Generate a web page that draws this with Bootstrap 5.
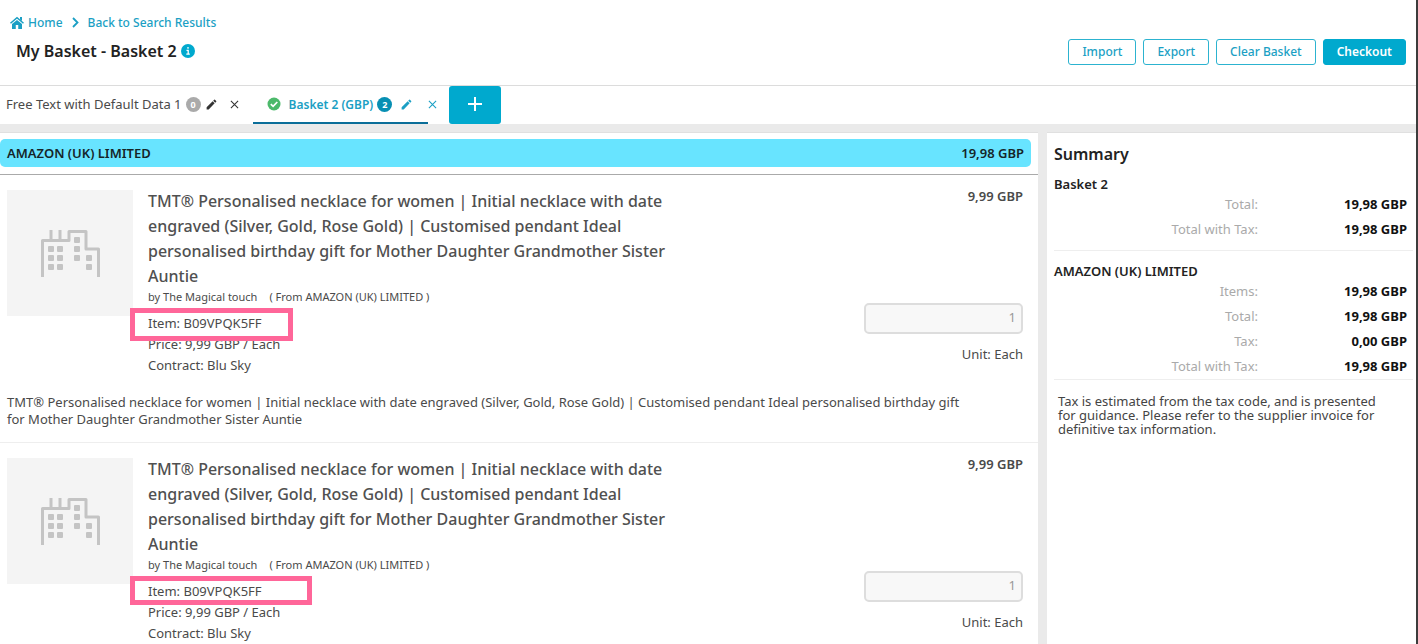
<!DOCTYPE html>
<html lang="en">
<head>
<meta charset="utf-8">
<meta name="viewport" content="width=device-width, initial-scale=1">
<title>My Basket - Basket 2</title>
<link href="https://cdn.jsdelivr.net/npm/bootstrap@5.3.0/dist/css/bootstrap.min.css" rel="stylesheet">
<style>
:root { --brand: #00a9ce; --link: #1b9fc4; --ink: #4a4a4a; }
body { font-family: "Noto Sans", "Open Sans", sans-serif; font-size: 13px; line-height: 17px; color: var(--ink); background: #eaeaea; border-right: 2px solid #3c3c3c; }
a { color: var(--link); text-decoration: none; }
.page-head { height: 86px; border-bottom: 1px solid #dcdcdc; }
.crumbs { font-size: 12px; font-weight: 500; padding: 14px 0 0 10px; gap: 7px; }
.page-title { font-size: 16px; line-height: 20px; font-weight: 600; color: #222; margin: 10px 0 0; padding-left: 16px; }
.head-tools { padding: 0 10px 20px 0; gap: 7px; }
.head-btn { font-size: 12px; line-height: 16px; font-weight: 500; padding: 4px 13px; border-radius: 3px; color: var(--link); border: 1px solid #2cb3d0; background: #fff; }
.head-btn.solid { background: var(--brand); border-color: var(--brand); color: #fff; font-weight: 600; }
.tab-strip { height: 38px; }
.basket-tab { height: 38px; border-bottom: 2px solid transparent; padding: 0 6px; }
.basket-tab.current { border-color: #0b6e99; color: var(--link); font-size: 12px; font-weight: 600; padding: 0 0 0 14px; width: 175px; }
.basket-tab button { border: 0; background: none; padding: 0; color: #333; display: flex; }
.basket-tab.current button, .basket-tab.tail button { color: var(--link); }
.basket-tab.tail { padding: 0; }
.tab-close { margin-left: 12px; }
.tally { width: 15px; height: 15px; border-radius: 8px; background: #aaa; color: #fff; font-size: 9px; line-height: 15px; font-weight: 700; text-align: center; }
.current .tally { background: #078fb3; }
.add-tab { width: 52px; height: 38px; border: 0; border-radius: 3px; background: var(--brand); margin-left: 12px; padding: 0 0 4px; }
.basket-area { gap: 9px; }
.panel { background: #fff; border-top: 1px solid #e0e0e0; }
.supplier-wrap { padding: 6px 7px 7px 0; border-bottom: 1px solid #aaa; }
.supplier-bar { background: #68e4ff; border-radius: 5px; color: #152528; font-weight: 600; line-height: 28px; padding: 0 7px; }
.item-row { padding: 14px 15px 14px 7px; border-bottom: 1px solid #eee; }
.thumb { width: 126px; height: 126px; background: #f4f4f4; margin-top: 1px; }
.item-body { padding-left: 15px; }
.item-title { font-size: 16px; line-height: 25px; font-weight: 500; color: #505050; max-width: 530px; }
.byline { font-size: 11px; line-height: 16px; margin-bottom: 8px; }
.byline span { margin-left: 12px; }
.facts { line-height: 21px; }
.outline-mark { position: absolute; top: -5px; left: -18px; width: 163px; height: 33px; border: 5px solid #ff6699; }
.outline-mark.wide { width: 182px; height: 29px; }
.amount { font-weight: 600; line-height: 14px; margin-bottom: 100px; }
.qty { width: 159px; height: 31px; font-size: 13px; text-align: right; padding: 0 5px 3px; border: 2px solid #ddd; border-radius: 5px; background: #f8f8f8; color: #999; }
.about { padding: 18px 45px 0 0; }
.side { width: 369px; padding: 11px 3px 12px 7px; }
.side h2 { font-size: 16px; line-height: 20px; font-weight: 600; color: #222; margin: 0 0 12px; }
.side h3 { font-size: 13px; line-height: 16px; font-weight: 600; color: #222; margin: 0; }
.sums { width: 100%; line-height: 25px; }
.sums th { width: 204px; text-align: right; font-weight: 400; color: #aaa; padding: 0; }
.sums td { text-align: right; font-weight: 700; color: #111; padding: 0 6px 0 0; }
.rule { border-top: 1px solid #eee; }
.side .next-group { margin-top: 8px; padding-top: 12px; }
.note { line-height: 14px; padding: 14px 20px 0 4px; color: #444; }
</style>
</head>
<body class="vh-100 overflow-hidden d-flex flex-column">
<svg class="d-none">
  <symbol id="pencil" viewBox="0 0 24 24"><path fill="currentColor" d="M3 17.2V21h3.8L17.8 9.9l-3.7-3.7L3 17.2zM20.7 7a1 1 0 0 0 0-1.4l-2.3-2.3a1 1 0 0 0-1.4 0l-1.9 1.8 3.8 3.8L20.7 7z"/></symbol>
  <symbol id="cross" viewBox="0 0 10 10"><path d="M1 1l8 8M9 1L1 9" stroke="currentColor" stroke-width="1.2"/></symbol>
  <symbol id="building" viewBox="0 0 59 47">
    <path d="M1.5 47V10.5H28V1.5H45V19H57.500V47M10 10V0M19 10V0" fill="none" stroke="#c4c4c4" stroke-width="3" stroke-linejoin="round"/>
    <g fill="#c4c4c4"><rect x="7" y="16" width="6" height="6" rx="1"/><rect x="16" y="16" width="6" height="6" rx="1"/><rect x="7" y="25" width="6" height="6" rx="1"/><rect x="16" y="25" width="6" height="6" rx="1"/><rect x="7" y="34" width="6" height="6" rx="1"/><rect x="16" y="34" width="6" height="6" rx="1"/><rect x="33" y="7" width="6" height="6" rx="1"/><rect x="33" y="16" width="6" height="6" rx="1"/><rect x="33" y="25" width="6" height="6" rx="1"/><rect x="45" y="25" width="6" height="6" rx="1"/><rect x="45" y="34" width="6" height="6" rx="1"/></g>
  </symbol>
</svg>

<header class="page-head bg-white d-flex justify-content-between flex-shrink-0">
  <div>
    <nav class="crumbs d-flex align-items-center" aria-label="breadcrumb">
      <a href="#" class="d-flex align-items-center gap-1"><svg width="14" height="13" viewBox="0 0 28 26"><path d="M14 8L4 16V26h7.500v-8h5v8H24V16z" fill="currentColor"/><path d="M1 14.500L14 3.500l13 11" fill="none" stroke="currentColor" stroke-width="3"/><path d="M20 2h4v8l-4-3z" fill="currentColor"/></svg>Home</a>
      <svg width="11" height="11" viewBox="0 0 11 11"><path d="M3 1l4.500 4.500L3 10" fill="none" stroke="#1b9fc4" stroke-width="1.800"/></svg>
      <a href="#">Back to Search Results</a>
    </nav>
    <h1 class="page-title d-flex align-items-center">My Basket - Basket 2
      <svg class="ms-1" width="14" height="14" viewBox="0 0 14 14"><circle cx="7" cy="7" r="7" fill="#00a9ce"/><path d="M7 3v1.800M5.500 6.300H7.200v4M5.300 10.200h3.500" stroke="#fff" stroke-width="1.300" fill="none"/></svg></h1>
  </div>
  <div class="head-tools d-flex align-items-end">
    <button type="button" class="head-btn">Import</button>
    <button type="button" class="head-btn">Export</button>
    <button type="button" class="head-btn">Clear Basket</button>
    <button type="button" class="head-btn solid">Checkout</button>
  </div>
</header>

<div class="tab-strip bg-white d-flex flex-shrink-0">
  <div class="basket-tab d-flex align-items-center">
    <span>Free Text with Default Data 1</span><span class="tally mx-1">0</span>
    <button type="button" aria-label="Edit"><svg width="13" height="13"><use href="#pencil"/></svg></button>
    <button type="button" aria-label="Close" class="tab-close"><svg width="9" height="9"><use href="#cross"/></svg></button>
  </div>
  <div class="basket-tab current d-flex align-items-center ms-2">
    <svg class="me-2" width="14" height="14" viewBox="0 0 14 14"><circle cx="7" cy="7" r="6.500" fill="#4cb96b"/><path d="M3.800 7.200l2.300 2.200 4.200-4.400" stroke="#fff" stroke-width="1.700" fill="none"/></svg>
    <span class="text-nowrap">Basket 2 (GBP)</span><span class="tally mx-1">2</span>
    <button type="button" aria-label="Edit" class="ms-1"><svg width="13" height="13"><use href="#pencil"/></svg></button>
  </div>
  <div class="basket-tab tail d-flex align-items-center"><button type="button" aria-label="Close"><svg width="9" height="9"><use href="#cross"/></svg></button></div>
  <button type="button" class="add-tab" aria-label="Add basket"><svg width="14" height="14" viewBox="0 0 14 14"><path d="M7 0v14M0 7h14" stroke="#fff" stroke-width="2"/></svg></button>
</div>

<main class="basket-area d-flex flex-grow-1 pt-2 overflow-hidden">
  <section class="panel flex-grow-1 overflow-hidden">
    <div class="supplier-wrap"><div class="supplier-bar d-flex justify-content-between"><span>AMAZON (UK) LIMITED</span><span>19,98 GBP</span></div></div>

    <article class="item-row">
      <div class="d-flex">
        <div class="thumb d-flex align-items-center justify-content-center flex-shrink-0"><svg width="59" height="47"><use href="#building"/></svg></div>
        <div class="item-body flex-grow-1">
          <div class="item-title">TMT® Personalised necklace for women | Initial necklace with date engraved (Silver, Gold, Rose Gold) | Customised pendant Ideal personalised birthday gift for Mother Daughter Grandmother Sister Auntie</div>
          <div class="byline">by The Magical touch<span>( From AMAZON (UK) LIMITED )</span></div>
          <div class="facts">
            <div class="position-relative">Item: B09VPQK5FF<span class="outline-mark"></span></div>
            <div>Price: 9,99 GBP / Each</div>
            <div>Contract: Blu Sky</div>
          </div>
        </div>
        <div class="text-end flex-shrink-0">
          <div class="amount">9,99 GBP</div>
          <input class="qty d-block" type="text" value="1" aria-label="Quantity" disabled>
          <div class="mt-2 pt-1">Unit: Each</div>
        </div>
      </div>
      <div class="about">TMT® Personalised necklace for women | Initial necklace with date engraved (Silver, Gold, Rose Gold) | Customised pendant Ideal personalised birthday gift for Mother Daughter Grandmother Sister Auntie</div>
    </article>

    <article class="item-row">
      <div class="d-flex">
        <div class="thumb d-flex align-items-center justify-content-center flex-shrink-0"><svg width="59" height="47"><use href="#building"/></svg></div>
        <div class="item-body flex-grow-1">
          <div class="item-title">TMT® Personalised necklace for women | Initial necklace with date engraved (Silver, Gold, Rose Gold) | Customised pendant Ideal personalised birthday gift for Mother Daughter Grandmother Sister Auntie</div>
          <div class="byline">by The Magical touch<span>( From AMAZON (UK) LIMITED )</span></div>
          <div class="facts">
            <div class="position-relative">Item: B09VPQK5FF<span class="outline-mark wide"></span></div>
            <div>Price: 9,99 GBP / Each</div>
            <div>Contract: Blu Sky</div>
          </div>
        </div>
        <div class="text-end flex-shrink-0">
          <div class="amount">9,99 GBP</div>
          <input class="qty d-block" type="text" value="1" aria-label="Quantity" disabled>
          <div class="mt-2 pt-1">Unit: Each</div>
        </div>
      </div>
    </article>
  </section>

  <aside class="panel side flex-shrink-0">
    <h2>Summary</h2>
    <h3>Basket 2</h3>
    <table class="sums">
      <tr><th scope="row">Total:</th><td>19,98 GBP</td></tr>
      <tr><th scope="row">Total with Tax:</th><td>19,98 GBP</td></tr>
    </table>
    <h3 class="rule next-group">AMAZON (UK) LIMITED</h3>
    <table class="sums">
      <tr><th scope="row">Items:</th><td>19,98 GBP</td></tr>
      <tr><th scope="row">Total:</th><td>19,98 GBP</td></tr>
      <tr><th scope="row">Tax:</th><td>0,00 GBP</td></tr>
      <tr><th scope="row">Total with Tax:</th><td>19,98 GBP</td></tr>
    </table>
    <div class="rule note">Tax is estimated from the tax code, and is presented for guidance. Please refer to the supplier invoice for definitive tax information.</div>
  </aside>
</main>
<script src="https://cdn.jsdelivr.net/npm/bootstrap@5.3.0/dist/js/bootstrap.bundle.min.js"></script>
</body>
</html>
